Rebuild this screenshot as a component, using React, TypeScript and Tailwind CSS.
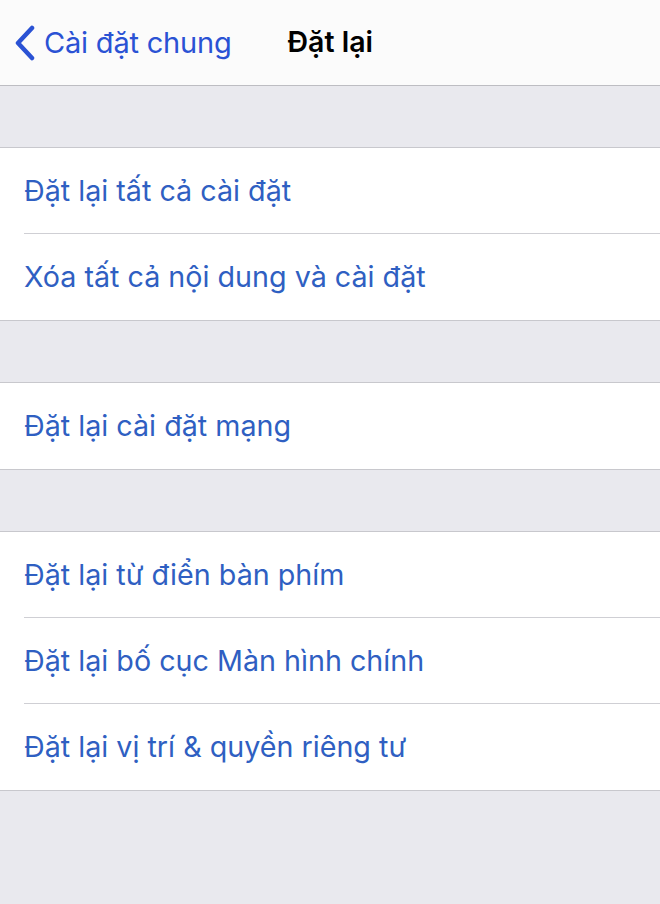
const groups: string[][] = [
  ["Đặt lại tất cả cài đặt", "Xóa tất cả nội dung và cài đặt"],
  ["Đặt lại cài đặt mạng"],
  ["Đặt lại từ điển bàn phím", "Đặt lại bố cục Màn hình chính", "Đặt lại vị trí & quyền riêng tư"],
];

function Row({ label, last }: { label: string; last: boolean }) {
  return (
    <div className="pl-6 bg-white">
      <div
        className={
          "h-[86px] flex items-center text-[28.7px] text-[#2f5fc2] " +
          (last ? "" : "border-b border-[#cfcfd4]")
        }
      >
        {label}
      </div>
    </div>
  );
}

export default function App() {
  return (
    <div
      className="min-h-[904px] bg-[#e9e9ee] flex flex-col"
      style={{ fontFamily: "Inter, 'Noto Sans', sans-serif" }}
    >
      <header className="h-[86px] bg-[#fbfbfb] border-b border-[#bdbdc2] flex items-center relative">
        <div className="flex items-center pl-3 text-[#2a52d4]">
          <svg width="26" height="36" viewBox="0 0 26 36" fill="none">
            <path d="M20 3 L6 18 L20 33" stroke="currentColor" strokeWidth="4.5" strokeLinecap="round" strokeLinejoin="round" />
          </svg>
          <span className="ml-[6px] text-[29px] tracking-[-0.2px]">Cài đặt chung</span>
        </div>
        <span className="ml-[56px] text-[28.5px] font-semibold text-black">Đặt lại</span>
      </header>

      {groups.map((items, gi) => (
        <div key={gi} className="mt-[61px] border-y border-[#c8c8cd] bg-white">
          {items.map((label, i) => (
            <Row key={label} label={label} last={i === items.length - 1} />
          ))}
        </div>
      ))}
    </div>
  );
}
